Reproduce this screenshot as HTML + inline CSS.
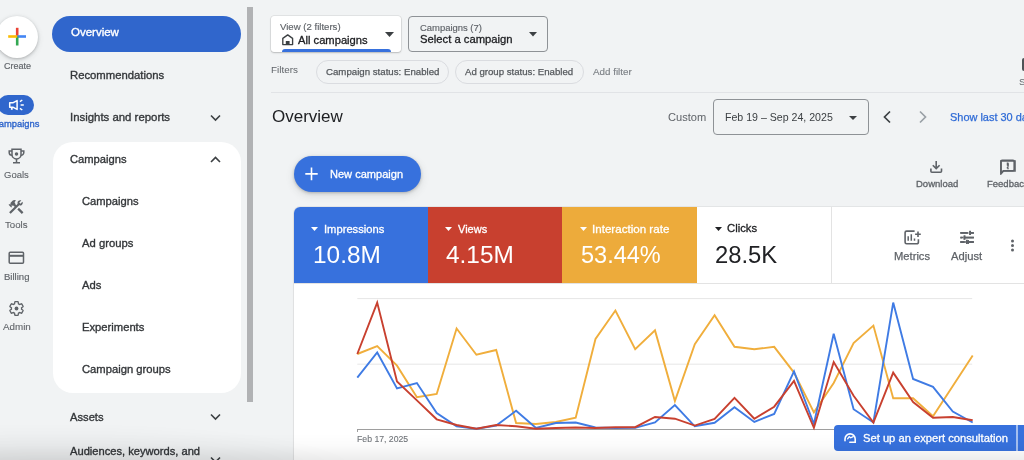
<!DOCTYPE html>
<html><head><meta charset="utf-8"><style>
html,body{margin:0;padding:0;}
body{width:1024px;height:460px;overflow:hidden;position:relative;background:#f1f3f4;font-family:"Liberation Sans", sans-serif;}
.t{position:absolute;white-space:nowrap;will-change:transform;}
</style></head><body>
<div style="position:absolute;left:-4px;top:15.5px;width:42px;height:42px;border-radius:50%;background:#fff;box-shadow:0 1px 3px rgba(60,64,67,.3),0 2px 6px rgba(60,64,67,.12)"></div>
<svg style="position:absolute;left:0;top:0" width="50" height="60"><g stroke-width="2.6" stroke-linecap="butt"><line x1="17.2" y1="27.8" x2="17.2" y2="36.5" stroke="#ea4335"/><line x1="17.2" y1="36.5" x2="26" y2="36.5" stroke="#4285f4"/><line x1="17.2" y1="36.5" x2="17.2" y2="45.5" stroke="#34a853"/><line x1="8.2" y1="36.5" x2="17.2" y2="36.5" stroke="#fbbc04"/></g></svg>
<div class="t" style="left:3.60px;top:61.64px;font-size:9.05px;line-height:9.05px;color:#5f6368;font-weight:normal;-webkit-text-stroke:0.15px #5f6368;">Create</div>
<div style="position:absolute;left:-2px;top:95px;width:36px;height:20px;border-radius:10px;background:#3066cc"></div>
<svg style="position:absolute;left:0;top:94px" width="34" height="21" viewBox="0 0 34 21"><path d="M9.7 8.8H12.8L17.1 6.6V15.4L12.8 13.2H9.7Z" fill="none" stroke="#fff" stroke-width="1.5" stroke-linejoin="round"/><path d="M10.9 13.2h1.8v2.6h-1.8z" fill="#fff"/><path d="M20.6 11h3.2M19.9 7.6l2.4-1.6M19.9 14.4l2.4 1.6" stroke="#fff" stroke-width="1.5"/></svg>
<div class="t" style="left:-8.20px;top:118.74px;font-size:9.4px;line-height:9.4px;color:#3066cc;font-weight:normal;-webkit-text-stroke:0.35px #3066cc;">Campaigns</div>
<svg style="position:absolute;left:8px;top:148px" width="17" height="16" viewBox="0 0 17 16" fill="none" stroke="#5f6368" stroke-width="1.5"><path d="M4 1.2h9v5.2a4.5 4.5 0 0 1-9 0z"/><path d="M4 3H1.2v1.5A2.8 2.8 0 0 0 4 7.3M13 3h2.8v1.5A2.8 2.8 0 0 1 13 7.3"/><path d="M8.5 11v3.5M5 14.8h7"/><circle cx="8.5" cy="6" r="1" fill="#5f6368"/></svg>
<div class="t" style="left:4.30px;top:169.96px;font-size:9.5px;line-height:9.5px;color:#5f6368;font-weight:normal;-webkit-text-stroke:0.1px #5f6368;">Goals</div>
<svg style="position:absolute;left:7.2px;top:197.6px" width="18" height="18" viewBox="0 0 24 24" fill="#5f6368"><path d="M13.783 15.172l2.121-2.121 5.996 5.996-2.121 2.121zM17.5 10c1.93 0 3.5-1.570 3.5-3.5 0-.58-.16-1.12-.41-1.6l-2.7 2.7-1.490-1.490 2.7-2.7c-.48-.25-1.020-.41-1.6-.41C15.570 3 14 4.570 14 6.5c0 .41.08.8.21 1.160l-1.850 1.850-1.780-1.780.71-.71-1.410-1.410L12 3.490c-1.170-1.170-3.070-1.170-4.240 0L4.220 7.030l1.410 1.410H2.810l-.71.71 3.540 3.540.71-.71V9.150l1.410 1.410.71-.71 1.780 1.780-7.410 7.410 2.120 2.120L16.340 9.790c.36.13.75.21 1.160.21z"/></svg>
<div class="t" style="left:5.40px;top:220.09px;font-size:9.7px;line-height:9.7px;color:#5f6368;font-weight:normal;-webkit-text-stroke:0.1px #5f6368;">Tools</div>
<svg style="position:absolute;left:8px;top:251px" width="17" height="14" viewBox="0 0 17 14" fill="none" stroke="#5f6368" stroke-width="1.5"><rect x="1.2" y="1.2" width="14.3" height="11" rx="1"/><path d="M1.2 4.8h14.3" stroke-width="2"/></svg>
<div class="t" style="left:3.50px;top:271.52px;font-size:9.55px;line-height:9.55px;color:#5f6368;font-weight:normal;-webkit-text-stroke:0.15px #5f6368;">Billing</div>
<svg style="position:absolute;left:8px;top:300px" width="17" height="17" viewBox="0 0 24 24" fill="#5f6368"><path d="M19.14 12.94c.04-.3.06-.61.06-.94 0-.32-.02-.64-.07-.94l2.03-1.58a.49.49 0 0 0 .12-.61l-1.92-3.32a.488.488 0 0 0-.59-.22l-2.39.96c-.5-.38-1.03-.7-1.62-.94l-.36-2.54a.484.484 0 0 0-.48-.41h-3.84c-.24 0-.43.17-.47.41l-.36 2.54c-.59.24-1.13.57-1.62.94l-2.39-.96c-.22-.08-.47 0-.59.22L2.74 8.87c-.12.21-.08.47.12.61l2.03 1.58c-.05.3-.09.63-.09.94s.02.64.07.94l-2.03 1.58a.49.49 0 0 0-.12.61l1.92 3.32c.12.22.37.29.59.22l2.39-.96c.5.38 1.03.7 1.62.94l.36 2.54c.05.24.24.41.48.41h3.84c.24 0 .44-.17.47-.41l.36-2.54c.59-.24 1.13-.56 1.62-.94l2.39.96c.22.08.47 0 .59-.22l1.92-3.32c.12-.22.07-.47-.12-.61l-2.01-1.58z" fill="none" stroke="#5f6368" stroke-width="1.9"/><circle cx="12" cy="12" r="2.7"/></svg>
<div class="t" style="left:2.90px;top:322.00px;font-size:9.8px;line-height:9.8px;color:#5f6368;font-weight:normal;-webkit-text-stroke:0.1px #5f6368;">Admin</div>
<div style="position:absolute;left:52px;top:16px;width:189px;height:36px;border-radius:18px;background:#3066cc"></div>
<div class="t" style="left:70.90px;top:27.47px;font-size:11.5px;line-height:11.5px;color:#fff;font-weight:normal;-webkit-text-stroke:0.35px #fff;">Overview</div>
<div class="t" style="left:70.40px;top:70.03px;font-size:11.3px;line-height:11.3px;color:#34373a;font-weight:normal;-webkit-text-stroke:0.35px #34373a;">Recommendations</div>
<div class="t" style="left:70.40px;top:111.85px;font-size:11.4px;line-height:11.4px;color:#34373a;font-weight:normal;-webkit-text-stroke:0.35px #34373a;">Insights and reports</div>
<div style="position:absolute;left:52.5px;top:141.7px;width:188.5px;height:251.3px;border-radius:20px;background:#fff"></div>
<div class="t" style="left:70.40px;top:154.02px;font-size:11.2px;line-height:11.2px;color:#34373a;font-weight:normal;-webkit-text-stroke:0.35px #34373a;">Campaigns</div>
<div class="t" style="left:82.30px;top:195.72px;font-size:11.2px;line-height:11.2px;color:#34373a;font-weight:normal;-webkit-text-stroke:0.35px #34373a;">Campaigns</div>
<div class="t" style="left:82.30px;top:237.68px;font-size:11.25px;line-height:11.25px;color:#34373a;font-weight:normal;-webkit-text-stroke:0.35px #34373a;">Ad groups</div>
<div class="t" style="left:82.30px;top:279.68px;font-size:11.25px;line-height:11.25px;color:#34373a;font-weight:normal;-webkit-text-stroke:0.35px #34373a;">Ads</div>
<div class="t" style="left:82.30px;top:321.79px;font-size:11.23px;line-height:11.23px;color:#34373a;font-weight:normal;-webkit-text-stroke:0.35px #34373a;">Experiments</div>
<div class="t" style="left:82.30px;top:363.99px;font-size:11.23px;line-height:11.23px;color:#34373a;font-weight:normal;-webkit-text-stroke:0.35px #34373a;">Campaign groups</div>
<div class="t" style="left:70.40px;top:411.72px;font-size:11.2px;line-height:11.2px;color:#34373a;font-weight:normal;-webkit-text-stroke:0.35px #34373a;">Assets</div>
<div class="t" style="left:70.40px;top:446.16px;font-size:11.15px;line-height:11.15px;color:#34373a;font-weight:normal;-webkit-text-stroke:0.35px #34373a;">Audiences, keywords, and</div>
<svg style="position:absolute;left:210px;top:114px" width="11" height="8" viewBox="0 0 11 8"><path d="M1 1.5l4.5 4.5L10 1.5" fill="none" stroke="#3c4043" stroke-width="1.6"/></svg>
<svg style="position:absolute;left:210px;top:155.5px" width="11" height="8" viewBox="0 0 11 8"><path d="M1 6l4.5-4.5L10 6" fill="none" stroke="#3c4043" stroke-width="1.6"/></svg>
<svg style="position:absolute;left:210px;top:413px" width="11" height="8" viewBox="0 0 11 8"><path d="M1 1.5l4.5 4.5L10 1.5" fill="none" stroke="#3c4043" stroke-width="1.6"/></svg>
<svg style="position:absolute;left:210px;top:455.5px" width="11" height="8" viewBox="0 0 11 8"><path d="M1 1.5l4.5 4.5L10 1.5" fill="none" stroke="#3c4043" stroke-width="1.6"/></svg>
<div style="position:absolute;left:247px;top:7px;width:6px;height:395px;background:#b1b2b4"></div>
<div style="position:absolute;left:271px;top:16px;width:130px;height:36px;background:#fff;border-radius:3px;box-shadow:0 0 0 0.5px rgba(0,0,0,.12),0 1px 2px rgba(0,0,0,.18)"></div>
<div class="t" style="left:280.20px;top:21.57px;font-size:9.6px;line-height:9.6px;color:#5f6368;font-weight:normal;-webkit-text-stroke:0.15px #5f6368;">View (2 filters)</div>
<svg style="position:absolute;left:281px;top:33px" width="14" height="14" viewBox="281 33 14 14" fill="none" stroke="#3c4043" stroke-width="1.35" stroke-linejoin="round"><path d="M282.8 44.6V38.4L287.7 34.9L292.6 38.4V44.6Z"/><path d="M285.8 44.6V40.9h3.8v3.7z" fill="#3c4043" stroke="none"/></svg>
<div class="t" style="left:298.30px;top:34.72px;font-size:11.2px;line-height:11.2px;color:#202124;font-weight:normal;-webkit-text-stroke:0.3px #202124;">All campaigns</div>
<svg style="position:absolute;left:385px;top:31.5px" width="9" height="5" viewBox="0 0 9 5"><path d="M0 0h9L4.5 5z" fill="#3c4043"/></svg>
<div style="position:absolute;left:281.5px;top:48.9px;width:109.5px;height:3.1px;background:#3771dd;border-radius:3px 3px 0 0"></div>
<div style="position:absolute;left:407.5px;top:16.2px;width:140.5px;height:35.4px;border:1px solid #8e9296;border-radius:4px;box-sizing:border-box"></div>
<div class="t" style="left:420.00px;top:23.20px;font-size:9.45px;line-height:9.45px;color:#5f6368;font-weight:normal;-webkit-text-stroke:0.15px #5f6368;">Campaigns (7)</div>
<div class="t" style="left:420.00px;top:34.18px;font-size:11.25px;line-height:11.25px;color:#202124;font-weight:normal;-webkit-text-stroke:0.3px #202124;">Select a campaign</div>
<svg style="position:absolute;left:529px;top:32px" width="8" height="5" viewBox="0 0 8 5"><path d="M0 0h8L4 4.5z" fill="#3c4043"/></svg>
<div class="t" style="left:271.40px;top:65.12px;font-size:9.9px;line-height:9.9px;color:#5f6368;font-weight:normal;">Filters</div>
<div style="position:absolute;left:315.8px;top:59.8px;width:133px;height:24px;border:1px solid #dadce0;border-radius:12px;box-sizing:border-box"></div>
<div class="t" style="left:325.80px;top:66.91px;font-size:9.68px;line-height:9.68px;color:#55595d;font-weight:normal;-webkit-text-stroke:0.25px #55595d;">Campaign status: Enabled</div>
<div style="position:absolute;left:455.4px;top:59.8px;width:128.5px;height:24px;border:1px solid #dadce0;border-radius:12px;box-sizing:border-box"></div>
<div class="t" style="left:465.20px;top:66.93px;font-size:9.65px;line-height:9.65px;color:#55595d;font-weight:normal;-webkit-text-stroke:0.25px #55595d;">Ad group status: Enabled</div>
<div class="t" style="left:593.00px;top:67.10px;font-size:9.8px;line-height:9.8px;color:#7d8186;font-weight:normal;-webkit-text-stroke:0.15px #7d8186;">Add filter</div>
<div style="position:absolute;left:1021.8px;top:57.6px;width:6px;height:13.7px;background:#505357;border-radius:2px"></div>
<div class="t" style="left:1019.20px;top:76.96px;font-size:9.5px;line-height:9.5px;color:#5f6368;font-weight:normal;">S</div>
<div style="position:absolute;left:271px;top:92px;width:760px;height:1px;background:#e1e3e6"></div>
<div class="t" style="left:271.60px;top:108.11px;font-size:17px;line-height:17px;color:#202124;font-weight:normal;">Overview</div>
<div class="t" style="left:668.40px;top:112.00px;font-size:11.1px;line-height:11.1px;color:#5f6368;font-weight:normal;">Custom</div>
<div style="position:absolute;left:712.5px;top:99.4px;width:156px;height:35.2px;border:1px solid #8e9296;border-radius:4px;box-sizing:border-box"></div>
<div class="t" style="left:725.30px;top:111.53px;font-size:10.6px;line-height:10.6px;color:#3c4043;font-weight:normal;">Feb 19 – Sep 24, 2025</div>
<svg style="position:absolute;left:849px;top:115.5px" width="8" height="4" viewBox="0 0 8 4"><path d="M0 0h8L4 4z" fill="#3c4043"/></svg>
<svg style="position:absolute;left:882px;top:110px" width="10" height="14" viewBox="0 0 10 14"><path d="M8 1.5L2.5 7 8 12.5" fill="none" stroke="#3c4043" stroke-width="1.7"/></svg>
<svg style="position:absolute;left:918px;top:110px" width="10" height="14" viewBox="0 0 10 14"><path d="M2 1.5L7.5 7 2 12.5" fill="none" stroke="#9aa0a6" stroke-width="1.7"/></svg>
<div class="t" style="left:949.60px;top:112.23px;font-size:10.95px;line-height:10.95px;color:#2f6bd6;font-weight:normal;-webkit-text-stroke:0.25px #2f6bd6;">Show last 30 days</div>
<div style="position:absolute;left:293.7px;top:156px;width:127.7px;height:35.6px;border-radius:18px;background:#3771dd;box-shadow:0 1px 3px rgba(60,64,67,.3),0 3px 8px rgba(60,64,67,.15)"></div>
<svg style="position:absolute;left:305px;top:167px" width="13" height="14" viewBox="0 0 13 14"><path d="M6.5 0.6v12.6M0.3 6.9h12.4" stroke="#fff" stroke-width="1.6"/></svg>
<div class="t" style="left:329.70px;top:168.75px;font-size:11.05px;line-height:11.05px;color:#fff;font-weight:normal;-webkit-text-stroke:0.3px #fff;">New campaign</div>
<svg style="position:absolute;left:920px;top:150px" width="104" height="30" viewBox="920 150 104 30" fill="none" stroke="#5f6368" stroke-width="1.6"><path d="M936.2 161v7.4M932.8 165.2l3.4 3.4 3.4-3.4"/><path d="M930.9 168.6v2.6a1 1 0 0 0 1 1h8.6a1 1 0 0 0 1-1v-2.6"/><path d="M1000.9 173.2V161.4a1.2 1.2 0 0 1 1.2-1.2H1013a1.2 1.2 0 0 1 1.2 1.2V169.6a1.2 1.2 0 0 1-1.2 1.2H1003.3Z" stroke-linejoin="round"/><path d="M1007.6 162.5v3M1007.6 167.1v1.5" stroke-width="1.7"/></svg>
<div class="t" style="left:915.70px;top:178.86px;font-size:9.5px;line-height:9.5px;color:#5f6368;font-weight:normal;-webkit-text-stroke:0.3px #5f6368;">Download</div>
<svg style="position:absolute;left:999.5px;top:159.5px" width="16" height="15" viewBox="0 0 16 15" fill="none" stroke="#5f6368" stroke-width="1.6"><path d="M1 13.8V1h14v10H3.5z"/><path d="M8 3.2v3.6M8 8.2v1" /></svg>
<div class="t" style="left:987.40px;top:178.86px;font-size:9.5px;line-height:9.5px;color:#5f6368;font-weight:normal;-webkit-text-stroke:0.3px #5f6368;">Feedback</div>
<div style="position:absolute;left:294.2px;top:207px;width:740px;height:253px;background:#fff;border-top-left-radius:6px;box-shadow:0 0 0 1px rgba(0,0,0,.05),0 1px 2px rgba(0,0,0,.08)"></div>
<div style="position:absolute;left:294.2px;top:207px;width:133.7px;height:76px;background:#3771dd;border-top-left-radius:6px"></div>
<div style="position:absolute;left:427.9px;top:207px;width:134.1px;height:76px;background:#c8402f"></div>
<div style="position:absolute;left:562px;top:207px;width:135px;height:76px;background:#edab3b"></div>
<div style="position:absolute;left:831px;top:207.4px;width:1px;height:75.6px;background:#e3e3e3"></div>
<div style="position:absolute;left:294.2px;top:283px;width:740px;height:1px;background:#e3e3e3"></div>
<svg style="position:absolute;left:311.4px;top:227.4px" width="7" height="4" viewBox="0 0 7 4"><path d="M0 0h7L3.5 4z" fill="#fff"/></svg>
<div class="t" style="left:323.60px;top:223.52px;font-size:11.2px;line-height:11.2px;color:#fff;font-weight:normal;-webkit-text-stroke:0.3px #fff;">Impressions</div>
<div class="t" style="left:313.40px;top:242.95px;font-size:24.4px;line-height:24.4px;color:#fff;font-weight:normal;">10.8M</div>
<svg style="position:absolute;left:445.4px;top:227.4px" width="7" height="4" viewBox="0 0 7 4"><path d="M0 0h7L3.5 4z" fill="#fff"/></svg>
<div class="t" style="left:458.20px;top:223.69px;font-size:11.0px;line-height:11.0px;color:#fff;font-weight:normal;-webkit-text-stroke:0.3px #fff;">Views</div>
<div class="t" style="left:446.40px;top:242.95px;font-size:24.4px;line-height:24.4px;color:#fff;font-weight:normal;">4.15M</div>
<svg style="position:absolute;left:579.5px;top:227.4px" width="7" height="4" viewBox="0 0 7 4"><path d="M0 0h7L3.5 4z" fill="#fff"/></svg>
<div class="t" style="left:591.80px;top:223.18px;font-size:11.6px;line-height:11.6px;color:#fff;font-weight:normal;-webkit-text-stroke:0.3px #fff;">Interaction rate</div>
<div class="t" style="left:581.40px;top:243.71px;font-size:23.5px;line-height:23.5px;color:#fff;font-weight:normal;">53.44%</div>
<svg style="position:absolute;left:714.5px;top:227.4px" width="7" height="4" viewBox="0 0 7 4"><path d="M0 0h7L3.5 4z" fill="#202124"/></svg>
<div class="t" style="left:726.80px;top:223.43px;font-size:11.3px;line-height:11.3px;color:#202124;font-weight:normal;-webkit-text-stroke:0.3px #202124;">Clicks</div>
<div class="t" style="left:715.40px;top:243.45px;font-size:23.8px;line-height:23.8px;color:#202124;font-weight:normal;">28.5K</div>
<svg style="position:absolute;left:900px;top:226px" width="80" height="22" viewBox="900 226 80 22" fill="none" stroke="#5f6368"><path d="M914.6 231.1H906.6a1.5 1.5 0 0 0-1.5 1.5V242.3a1.5 1.5 0 0 0 1.5 1.5H916.9a1.5 1.5 0 0 0 1.5-1.5V239.2" stroke-width="1.6"/><path d="M908.2 236.2v4.6M911.3 234.2v6.6M914.5 238.5v2.3" stroke-width="1.5"/><path d="M915.1 234.2h5.7M918 231.4v5.7" stroke-width="1.6"/><path d="M960.2 232.9h7.6M970.1 232.9h3.7M970.1 230.7v4.3M960.3 237.6h2M964.3 237.6h9.5M964.3 235.4v4.3M960.2 242h4.4M966.9 242h6.9M966.9 239.8v4.3" stroke-width="1.8"/></svg>
<div class="t" style="left:893.80px;top:250.82px;font-size:11.2px;line-height:11.2px;color:#5f6368;font-weight:normal;-webkit-text-stroke:0.25px #5f6368;">Metrics</div>
<svg style="position:absolute;left:960px;top:231px" width="14" height="13" viewBox="0 0 14 13" fill="none" stroke="#5f6368" stroke-width="1.5"><path d="M0.5 2h8M11 2h3M10 0v4M0.5 6.5h3M6 6.5h8M4.8 4.5v4M0.5 11h6.5M9.5 11h4.5M8.2 9v4"/></svg>
<div class="t" style="left:951.40px;top:250.82px;font-size:11.2px;line-height:11.2px;color:#5f6368;font-weight:normal;-webkit-text-stroke:0.25px #5f6368;">Adjust</div>
<svg style="position:absolute;left:1010px;top:239px" width="5" height="13" viewBox="0 0 5 13" fill="#5f6368"><circle cx="2.5" cy="2" r="1.5"/><circle cx="2.5" cy="6.5" r="1.5"/><circle cx="2.5" cy="11" r="1.5"/></svg>
<svg style="position:absolute;left:0;top:0" width="1024" height="460"><line x1="357.3" y1="298.6" x2="972.2" y2="298.6" stroke="#e6e6e6" stroke-width="1"/><line x1="357.3" y1="364.2" x2="972.2" y2="364.2" stroke="#e6e6e6" stroke-width="1"/><line x1="357.3" y1="429.5" x2="1024" y2="429.5" stroke="#9e9e9e" stroke-width="1"/><polyline points="357.3,354.0 377.2,346.0 397.0,365.7 416.9,397.3 436.7,394.0 456.6,328.5 476.4,354.7 496.2,350.0 516.1,423.0 536.0,424.0 555.8,422.0 575.7,417.8 595.5,339.0 615.4,310.5 635.2,349.3 655.0,330.4 674.9,401.0 694.8,344.3 714.6,315.2 734.5,346.8 754.3,349.3 774.2,346.8 794.0,372.6 813.9,412.4 833.7,383.0 853.6,343.0 873.4,325.6 893.2,398.2 913.1,398.2 933.0,416.2 952.8,386.0 972.7,355.6" fill="none" stroke="#f0ae3c" stroke-width="1.9" stroke-linejoin="miter"/><polyline points="357.3,377.7 377.2,352.5 397.0,388.4 416.9,383.0 436.7,413.0 456.6,426.3 476.4,428.8 496.2,425.6 516.1,410.8 536.0,428.0 555.8,423.0 575.7,422.5 595.5,427.5 615.4,428.0 635.2,427.8 655.0,422.5 674.9,405.0 694.8,426.3 714.6,422.8 734.5,407.3 754.3,421.9 774.2,414.0 794.0,371.4 813.9,424.0 833.7,333.8 853.6,409.2 873.4,422.5 893.2,302.6 913.1,379.0 933.0,386.8 952.8,411.5 972.7,422.5" fill="none" stroke="#3f7be4" stroke-width="1.9"/><polyline points="357.3,354.0 377.2,302.6 397.0,381.5 416.9,400.4 436.7,419.3 456.6,425.0 476.4,428.8 496.2,425.0 516.1,426.3 536.0,428.8 555.8,428.0 575.7,427.5 595.5,428.0 615.4,427.2 635.2,427.2 655.0,417.0 674.9,418.7 694.8,425.6 714.6,419.0 734.5,397.9 754.3,418.7 774.2,406.7 794.0,380.9 813.9,427.8 833.7,362.0 853.6,395.7 873.4,422.5 893.2,372.6 913.1,402.0 933.0,417.8 952.8,417.0 972.7,420.3" fill="none" stroke="#c8402f" stroke-width="1.9"/></svg>
<div style="position:absolute;left:356.8px;top:429px;width:1.2px;height:3px;background:#9e9e9e"></div>
<div class="t" style="left:357.30px;top:435.34px;font-size:8.7px;line-height:8.7px;color:#6f7378;font-weight:normal;-webkit-text-stroke:0.1px #6f7378;">Feb 17, 2025</div>
<div style="position:absolute;left:834.2px;top:424.8px;width:200px;height:26.7px;background:#3771dd;border-radius:4px 0 0 4px"></div>
<div style="position:absolute;left:1016.4px;top:424.8px;width:1.2px;height:26.7px;background:rgba(255,255,255,.55)"></div>
<svg style="position:absolute;left:838px;top:426px" width="24" height="24" viewBox="838 426 24 24" fill="none" stroke="#fff" stroke-linecap="round"><path d="M845 440.8V439a5.1 5.1 0 0 1 10.2 0v3.3H849.8" stroke-width="1.6"/><path d="M847.6 438.8l1.6-2.2 1.4 1.2 2.6-1.2" stroke-width="1.3"/></svg>
<div class="t" style="left:862.70px;top:432.82px;font-size:11.2px;line-height:11.2px;color:#fff;font-weight:normal;-webkit-text-stroke:0.3px #fff;">Set up an expert consultation</div>
<div style="position:absolute;left:0px;top:434px;width:1024px;height:26px;background:linear-gradient(to bottom, rgba(0,0,0,0) 0%, rgba(0,0,0,.015) 45%, rgba(0,0,0,.06) 85%, rgba(0,0,0,.075) 100%)"></div>
<div style="position:absolute;left:0px;top:400px;width:400px;height:60px;background:radial-gradient(ellipse 300px 45px at 60px 68px, rgba(0,0,0,.06), rgba(0,0,0,0))"></div>
</body></html>
